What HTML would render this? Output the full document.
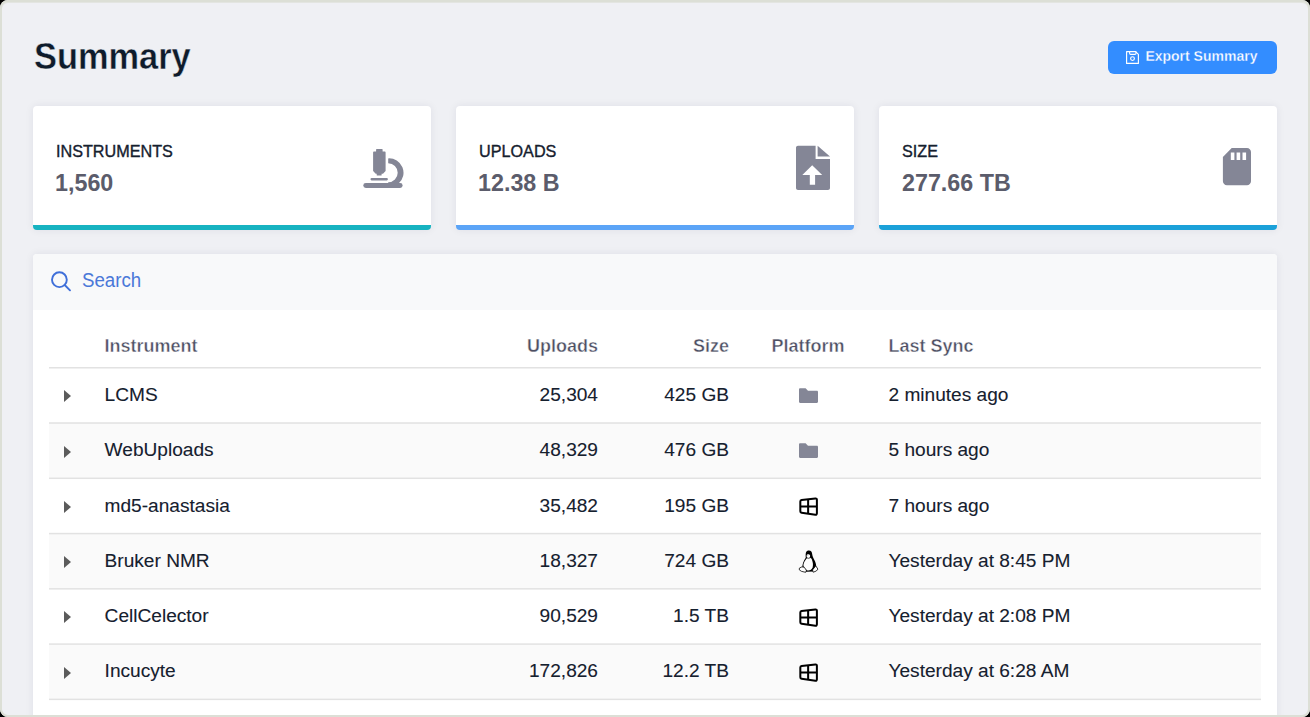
<!DOCTYPE html>
<html><head><meta charset="utf-8">
<style>
html,body{margin:0;padding:0;width:1310px;height:717px;overflow:hidden;background:#000;}
*{box-sizing:border-box;}
body{font-family:"Liberation Sans",sans-serif;}
.frame{position:absolute;left:0;top:0;width:1310px;height:717px;background:#eff0f4;}
.frame2{position:absolute;left:0;top:0;width:1310px;height:717px;border:2px solid #dcdfd6;border-radius:8px;box-shadow:0 0 0 30px #000,inset 0 1px 0 #e3e5e1;z-index:10;pointer-events:none;}
.abs{position:absolute;white-space:nowrap;line-height:1;}
.title{font-size:36px;font-weight:700;color:#0e1b2b;-webkit-text-stroke:0.4px #eff0f4;}
.btn{position:absolute;left:1108px;top:41px;width:169px;height:33px;border-radius:6px;background:#338dff;}
.btxt{font-size:14px;font-weight:700;color:#fff;-webkit-text-stroke:0.3px #338dff;}
.card{position:absolute;top:106px;width:398px;height:124px;background:#fff;border-radius:4px;border-bottom:5px solid #17b3c1;box-shadow:0 0 8px rgba(30,30,70,0.075);}
.lbl{font-size:16.2px;color:#15202e;-webkit-text-stroke:0.35px #15202e;}
.val{font-size:23.3px;font-weight:700;color:#5b5c6b;}
.panel{position:absolute;left:33px;top:254px;width:1244px;height:480px;background:#fff;border-radius:4px;box-shadow:0 0 8px rgba(30,30,70,0.075);overflow:hidden;}
.search{position:absolute;left:0;top:0;width:1244px;height:55.5px;background:#f8f9fa;}
.stxt{font-size:20px;color:#4a78d8;transform:scaleX(0.935);transform-origin:0 0;}
.th{font-size:18px;font-weight:700;color:#4d4f63;-webkit-text-stroke:0.4px #fff;}
.td{font-size:19.1px;color:#15202e;-webkit-text-stroke:0.1px #15202e;}
.line{position:absolute;left:49px;width:1212px;height:2px;background:#e6e6e6;}
.rowbg{position:absolute;left:49px;width:1212px;background:#fafafa;}
.caret{position:absolute;left:63.8px;width:0;height:0;border-top:6.3px solid transparent;border-bottom:6.3px solid transparent;border-left:7.8px solid #5b5b5b;}
</style></head><body>
<div class="frame"></div>

<div class="abs title" style="left:34px;top:39px;transform:scaleX(0.955);transform-origin:0 0;">Summary</div>

<div class="btn"></div>
<svg style="position:absolute;left:1126px;top:51px" width="13" height="13" viewBox="0 0 13 13" fill="none" stroke="#fff" stroke-width="1.15" stroke-linejoin="round">
  <path d="M0.6 0.6H9.6L12.4 3.4V12.4H0.6Z"/>
  <path d="M3.6 0.6V2.2Q3.6 3.3 4.7 3.3H8.9Q10 3.3 10 2.2V0.6"/>
  <circle cx="6.5" cy="7.6" r="1.9"/>
</svg>
<div class="abs btxt" style="left:1145.4px;top:49.3px;">Export Summary</div>

<!-- cards -->
<div class="card" style="left:33px;border-bottom-color:#17b3c1"></div>
<div class="card" style="left:456px;border-bottom-color:#5ba4f7"></div>
<div class="card" style="left:879px;border-bottom-color:#1ba1d9"></div>

<div class="abs lbl" style="left:56px;top:142.8px;">INSTRUMENTS</div>
<div class="abs val" style="left:55px;top:172px;">1,560</div>
<div class="abs lbl" style="left:479px;top:142.8px;">UPLOADS</div>
<div class="abs val" style="left:478px;top:172px;">12.38 B</div>
<div class="abs lbl" style="left:902px;top:142.8px;">SIZE</div>
<div class="abs val" style="left:902px;top:172px;">277.66 TB</div>

<!-- microscope -->
<svg style="position:absolute;left:360px;top:145px" width="46" height="47" viewBox="360 145 46 47" fill="#848696">
<path d="M376.6 148.9H382.1Q382.6 148.9 382.6 149.4V151.6H384.8Q385.6 151.6 385.6 152.4V170.9L383 173.8H381.6V175Q381.6 175.5 381.1 175.5H377.2Q376.7 175.5 376.7 175V173.8H375.7L373.1 170.9V152.4Q373.1 151.6 373.9 151.6H376.1V149.4Q376.1 148.9 376.6 148.9Z"/>
<path d="M371.6 178.1H386.8Q387.9 178.1 387.9 179.25Q387.9 180.4 386.8 180.4H371.6Q370.5 180.4 370.5 179.25Q370.5 178.1 371.6 178.1Z"/>
<path d="M388.2 158.4A14.4 14.4 0 0 1 398.6 183.6L388.2 183.6V182.3A9.5 9.5 0 0 0 388.2 163.3Z"/>
<path d="M365.8 183H400.1Q402.6 183 402.6 185.45Q402.6 187.9 400.1 187.9H365.8Q363.3 187.9 363.3 185.45Q363.3 183 365.8 183Z"/>
</svg>
<!-- file upload -->
<svg style="position:absolute;left:780px;top:135px" width="70" height="70" viewBox="0 0 70 70" fill="#848696">
<path d="M18 10.7H35.6V23.9H50V52.9C50 54 49.1 54.9 48 54.9H18C16.9 54.9 16 54 16 52.9V12.7C16 11.6 16.9 10.7 18 10.7Z M32.2 30.3L22.3 40H29.8V49.8H35.1V40H42.2Z" fill-rule="evenodd"/>
<path d="M37.6 10.7L50 21.5H37.6Z"/>
</svg>
<!-- sd card -->
<svg style="position:absolute;left:1200px;top:135px" width="70" height="70" viewBox="0 0 70 70" fill="#848696">
<path d="M31.7 12.9H47C49.2 12.9 51 14.7 51 16.9V46.3C51 48.5 49.2 50.3 47 50.3H26.9C24.7 50.3 22.9 48.5 22.9 46.3V22Z M30.8 17.6V24.9H34.4V17.6Z M36.6 17.6V24.9H40.2V17.6Z M42.5 17.6V24.9H46.1V17.6Z" fill-rule="evenodd"/>
</svg>

<!-- panel -->
<div class="panel">
  <div class="search"></div>
</div>
<svg style="position:absolute;left:50px;top:271px" width="24" height="24" viewBox="0 0 24 24" fill="none" stroke="#3f6fd9" stroke-width="1.9" stroke-linecap="round">
  <circle cx="9.4" cy="8.7" r="7.4"/>
  <path d="M14.7 14L20 19.3"/>
</svg>
<div class="abs stxt" style="left:82px;top:270.2px;">Search</div>

<div class="abs th" style="left:104.6px;top:336.9px;">Instrument</div>
<div class="abs th" style="left:498px;width:100px;text-align:right;top:336.9px;">Uploads</div>
<div class="abs th" style="left:629px;width:100px;text-align:right;top:336.9px;">Size</div>
<div class="abs th" style="left:758px;width:100px;text-align:center;top:336.9px;">Platform</div>
<div class="abs th" style="left:888.6px;top:336.9px;">Last Sync</div>

<!--ROWS-->
<svg style="position:absolute;left:0;top:0" width="1310" height="717" viewBox="0 0 1310 717"><rect x="49" y="423.02" width="1212" height="55.27" fill="#fafafa"/><rect x="49" y="533.56" width="1212" height="55.27" fill="#fafafa"/><rect x="49" y="644.10" width="1212" height="55.27" fill="#fafafa"/><rect x="49" y="367.00" width="1212" height="1.5" fill="#e2e2e2"/><rect x="49" y="422.27" width="1212" height="1.5" fill="#e2e2e2"/><rect x="49" y="477.54" width="1212" height="1.5" fill="#e2e2e2"/><rect x="49" y="532.81" width="1212" height="1.5" fill="#e2e2e2"/><rect x="49" y="588.08" width="1212" height="1.5" fill="#e2e2e2"/><rect x="49" y="643.35" width="1212" height="1.5" fill="#e2e2e2"/><rect x="49" y="698.62" width="1212" height="1.5" fill="#e2e2e2"/></svg>
<div class="caret" style="top:390.28px"></div>
<div class="abs td" style="left:104.6px;top:385.13px">LCMS</div>
<div class="abs td" style="left:498px;width:100px;text-align:right;top:385.13px">25,304</div>
<div class="abs td" style="left:629px;width:100px;text-align:right;top:385.13px">425 GB</div>
<div class="abs td" style="left:888.5px;top:385.13px">2 minutes ago</div>
<svg style="position:absolute;left:799px;top:388.00px" width="19" height="15" viewBox="0 0 19 15" fill="#848696"><path d="M1.2 0.2H6.6L9 2.8H17.8C18.5 2.8 19 3.3 19 4V13.8C19 14.5 18.5 15 17.8 15H1.2C0.5 15 0 14.5 0 13.8V1.4C0 0.7 0.5 0.2 1.2 0.2Z"/></svg>
<div class="caret" style="top:445.55px"></div>
<div class="abs td" style="left:104.6px;top:440.40px">WebUploads</div>
<div class="abs td" style="left:498px;width:100px;text-align:right;top:440.40px">48,329</div>
<div class="abs td" style="left:629px;width:100px;text-align:right;top:440.40px">476 GB</div>
<div class="abs td" style="left:888.5px;top:440.40px">5 hours ago</div>
<svg style="position:absolute;left:799px;top:443.27px" width="19" height="15" viewBox="0 0 19 15" fill="#848696"><path d="M1.2 0.2H6.6L9 2.8H17.8C18.5 2.8 19 3.3 19 4V13.8C19 14.5 18.5 15 17.8 15H1.2C0.5 15 0 14.5 0 13.8V1.4C0 0.7 0.5 0.2 1.2 0.2Z"/></svg>
<div class="caret" style="top:500.82px"></div>
<div class="abs td" style="left:104.6px;top:495.67px">md5-anastasia</div>
<div class="abs td" style="left:498px;width:100px;text-align:right;top:495.67px">35,482</div>
<div class="abs td" style="left:629px;width:100px;text-align:right;top:495.67px">195 GB</div>
<div class="abs td" style="left:888.5px;top:495.67px">7 hours ago</div>
<svg style="position:absolute;left:790px;top:490.00px" width="40" height="40" viewBox="0 0 717 717" fill="none" stroke="#000" stroke-width="36" stroke-linejoin="round"><path d="M185 207Q185 184 208 181L455 152Q482 149 482 176V418Q482 445 455 442L208 407Q185 404 185 381Z"/><path d="M185 296H482M325 166V424"/></svg>
<div class="caret" style="top:556.09px"></div>
<div class="abs td" style="left:104.6px;top:550.94px">Bruker NMR</div>
<div class="abs td" style="left:498px;width:100px;text-align:right;top:550.94px">18,327</div>
<div class="abs td" style="left:629px;width:100px;text-align:right;top:550.94px">724 GB</div>
<div class="abs td" style="left:888.5px;top:550.94px">Yesterday at 8:45 PM</div>
<svg style="position:absolute;left:790px;top:545.00px" width="40" height="40" viewBox="0 0 717 717"><path fill="#000" d="M338 100C378 100 396 130 398 168C402 212 428 250 448 292C466 335 472 372 466 405L420 475L290 478L222 400C218 350 240 290 282 228C280 190 280 160 286 135C296 112 315 100 338 100Z"/><path fill="#fff" d="M298 242C266 282 244 322 240 360C240 405 268 445 312 455C352 462 388 445 406 400C420 355 406 300 392 262C380 236 362 226 336 226C320 226 306 232 298 242Z"/><path fill="#fff" d="M298 190C300 175 318 165 335 168C352 172 362 186 360 205C356 225 340 236 322 236C305 234 296 215 298 190Z"/><path fill="#999" d="M305 182C312 172 328 170 336 178C330 186 316 190 305 182Z"/><path fill="none" stroke="#000" stroke-width="11" d="M292 226Q322 252 364 230"/><path fill="#fff" stroke="#000" stroke-width="14" stroke-linejoin="round" d="M168 415L213 392L255 398L294 452L281 490L206 472L167 446Z"/><path fill="#fff" stroke="#000" stroke-width="14" stroke-linejoin="round" d="M404 446L462 374L500 432L472 466L416 488Z"/></svg>
<div class="caret" style="top:611.37px"></div>
<div class="abs td" style="left:104.6px;top:606.21px">CellCelector</div>
<div class="abs td" style="left:498px;width:100px;text-align:right;top:606.21px">90,529</div>
<div class="abs td" style="left:629px;width:100px;text-align:right;top:606.21px">1.5 TB</div>
<div class="abs td" style="left:888.5px;top:606.21px">Yesterday at 2:08 PM</div>
<svg style="position:absolute;left:790px;top:600.54px" width="40" height="40" viewBox="0 0 717 717" fill="none" stroke="#000" stroke-width="36" stroke-linejoin="round"><path d="M185 207Q185 184 208 181L455 152Q482 149 482 176V418Q482 445 455 442L208 407Q185 404 185 381Z"/><path d="M185 296H482M325 166V424"/></svg>
<div class="caret" style="top:666.63px"></div>
<div class="abs td" style="left:104.6px;top:661.48px">Incucyte</div>
<div class="abs td" style="left:498px;width:100px;text-align:right;top:661.48px">172,826</div>
<div class="abs td" style="left:629px;width:100px;text-align:right;top:661.48px">12.2 TB</div>
<div class="abs td" style="left:888.5px;top:661.48px">Yesterday at 6:28 AM</div>
<svg style="position:absolute;left:790px;top:655.81px" width="40" height="40" viewBox="0 0 717 717" fill="none" stroke="#000" stroke-width="36" stroke-linejoin="round"><path d="M185 207Q185 184 208 181L455 152Q482 149 482 176V418Q482 445 455 442L208 407Q185 404 185 381Z"/><path d="M185 296H482M325 166V424"/></svg>
<!--/ROWS-->
<div class="frame2"></div>
</body></html>
